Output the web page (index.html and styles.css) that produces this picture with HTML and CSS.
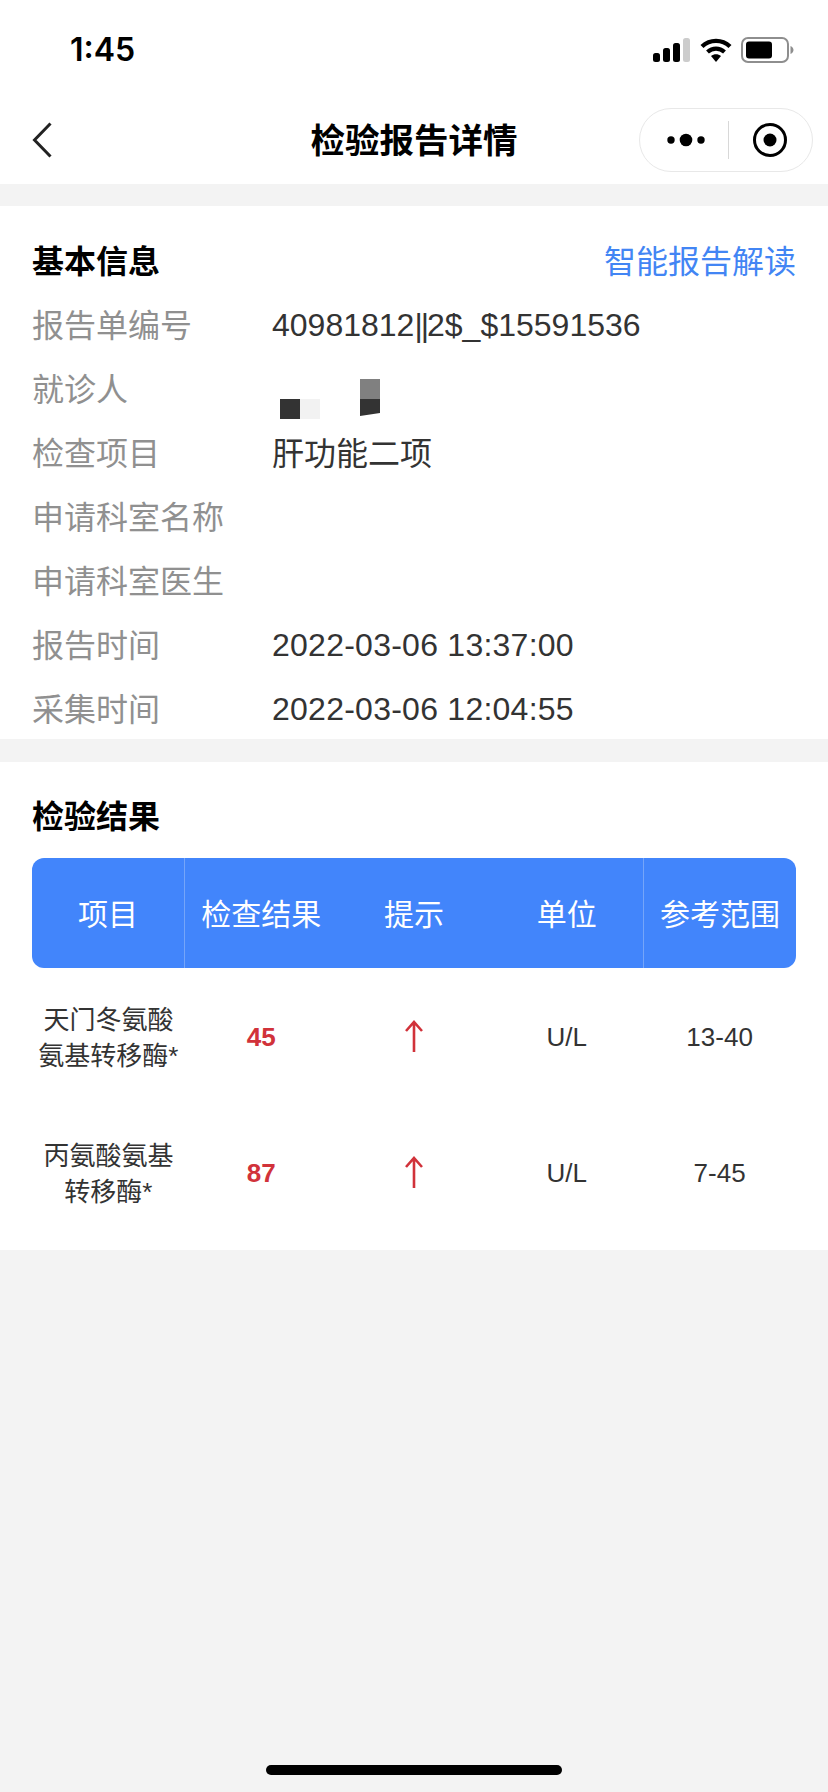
FILE: index.html
```html
<!DOCTYPE html>
<html lang="zh-CN">
<head>
    <meta charset="UTF-8">
    <meta name="viewport" content="width=device-width, initial-scale=1.0">
    <title>检验报告详情</title>
    <link rel="stylesheet" href="styles.css">
</head>
<body>
    <div class="page">
        <div class="status-bar">
            <span class="time">1:45</span>
            <div class="status-icons">
                <svg width="37" height="24" viewBox="0 0 37 24">
                    <rect x="0" y="15" width="7" height="9" rx="2.5" fill="#000"/>
                    <rect x="10" y="10" width="7" height="14" rx="2.5" fill="#000"/>
                    <rect x="20" y="5" width="7" height="19" rx="2.5" fill="#000"/>
                    <rect x="30" y="0" width="7" height="24" rx="2.5" fill="#ccc"/>
                </svg>
                <svg width="32" height="24" viewBox="0 0 32 24">
                    <path d="M2 8.5 C10 1 22 1 30 8.5" fill="none" stroke="#000" stroke-width="4.4"/>
                    <path d="M7.5 14 C12.5 9.5 19.5 9.5 24.5 14" fill="none" stroke="#000" stroke-width="4.2"/>
                    <path d="M11 18 C14 15.6 18 15.6 21 18 L16 24 Z" fill="#000"/>
                </svg>
                <svg width="53" height="26" viewBox="0 0 53 26">
                    <rect x="1" y="1" width="46" height="24" rx="6" fill="none" stroke="#8e8e8e" stroke-width="2"/>
                    <rect x="5" y="4.5" width="26" height="17" rx="3" fill="#000"/>
                    <path d="M49.5 9 C51.5 10 52.5 11.5 52.5 13 C52.5 14.5 51.5 16 49.5 17 Z" fill="#8e8e8e"/>
                </svg>
            </div>
        </div>

        <div class="nav-bar">
            <svg class="back" width="20" height="36" viewBox="0 0 20 36">
                <path d="M18.5 1.5 L2.5 18 L18.5 34.5" fill="none" stroke="#222" stroke-width="3"/>
            </svg>
            <h1 class="nav-title">检验报告详情</h1>
            <div class="capsule">
                <div class="capsule-part capsule-more">
                    <svg width="38" height="14" viewBox="0 0 38 14">
                        <circle cx="4" cy="7" r="3.7" fill="#000"/>
                        <circle cx="19" cy="7" r="6.3" fill="#000"/>
                        <circle cx="34" cy="7" r="3.7" fill="#000"/>
                    </svg>
                </div>
                <div class="capsule-line"></div>
                <div class="capsule-part">
                    <svg width="36" height="36" viewBox="0 0 36 36">
                        <circle cx="18" cy="18" r="15.5" fill="none" stroke="#000" stroke-width="3"/>
                        <circle cx="18" cy="18" r="6.5" fill="#000"/>
                    </svg>
                </div>
            </div>
        </div>

        <section class="card info-card">
            <div class="card-head">
                <h2 class="card-title">基本信息</h2>
                <a class="ai-link">智能报告解读</a>
            </div>
            <div class="info-row"><span class="info-label">报告单编号</span><span class="info-value">40981812<span class="pipes">||</span>2$_$15591536</span></div>
            <div class="info-row">
                <span class="info-label">就诊人</span>
                <span class="info-value">
                    <svg class="mosaic" width="100" height="42" viewBox="0 0 100 42">
                        <rect x="8" y="20" width="20" height="20" fill="#333"/>
                        <rect x="28" y="20" width="20" height="20" fill="#f2f2f2"/>
                        <rect x="88" y="0" width="20" height="20" fill="#808080"/>
                        <path d="M88 20 H108 V34 L88 37 Z" fill="#333"/>
                    </svg>
                </span>
            </div>
            <div class="info-row"><span class="info-label">检查项目</span><span class="info-value info-text">肝功能二项</span></div>
            <div class="info-row"><span class="info-label">申请科室名称</span><span class="info-value"></span></div>
            <div class="info-row"><span class="info-label">申请科室医生</span><span class="info-value"></span></div>
            <div class="info-row"><span class="info-label">报告时间</span><span class="info-value info-date">2022-03-06 13:37:00</span></div>
            <div class="info-row"><span class="info-label">采集时间</span><span class="info-value info-date">2022-03-06 12:04:55</span></div>
        </section>

        <section class="card result-card">
            <h2 class="card-title result-title">检验结果</h2>
            <div class="table-head">
                <div class="th th-line-right">项目</div>
                <div class="th">检查结果</div>
                <div class="th">提示</div>
                <div class="th">单位</div>
                <div class="th th-line-left">参考范围</div>
            </div>
            <div class="table-row">
                <div class="td td-name">天门冬氨酸<br>氨基转移酶*</div>
                <div class="td td-high">45</div>
                <div class="td td-arrow"><svg width="20" height="32" viewBox="0 0 20 32"><path d="M10 32 V2 M2 11 L10 2 L18 11" fill="none" stroke="#d1323a" stroke-width="2.6"/></svg></div>
                <div class="td">U/L</div>
                <div class="td">13-40</div>
            </div>
            <div class="table-row">
                <div class="td td-name">丙氨酸氨基<br>转移酶*</div>
                <div class="td td-high">87</div>
                <div class="td td-arrow"><svg width="20" height="32" viewBox="0 0 20 32"><path d="M10 32 V2 M2 11 L10 2 L18 11" fill="none" stroke="#d1323a" stroke-width="2.6"/></svg></div>
                <div class="td">U/L</div>
                <div class="td">7-45</div>
            </div>
        </section>

        <div class="rest">
            <div class="home-bar"></div>
        </div>
    </div>
</body>
</html>
```

FILE: styles.css
```css
* {
    box-sizing: border-box;
}
body {
    margin: 0;
    font-family: "Liberation Sans", "Noto Sans CJK SC", sans-serif;
    background-color: #f3f3f3;
}
.page {
    display: flex;
    flex-direction: column;
    height: 1792px;
    overflow: hidden;
}

/* status bar */
.status-bar {
    height: 88px;
    background-color: #fff;
    display: flex;
    justify-content: space-between;
    align-items: center;
    padding: 12px 34px 0 70px;
}
.time {
    font-family: Inter, "Liberation Sans", sans-serif;
    font-size: 32px;
    font-weight: 600;
    color: #000;
    margin-top: -1px;
}
.status-icons {
    display: flex;
    align-items: center;
    gap: 9.5px;
    margin-top: -1px;
}

/* nav bar */
.nav-bar {
    height: 96px;
    background-color: #fff;
    display: flex;
    align-items: center;
    justify-content: space-between;
    padding: 8px 15px 0 32px;
    position: relative;
}
.back {
    display: block;
}
.nav-title {
    position: absolute;
    left: 0;
    right: 0;
    margin: -4px 0 0;
    text-align: center;
    font-size: 34.5px;
    font-weight: 700;
    color: #000;
    pointer-events: none;
}
.capsule {
    width: 174px;
    height: 64px;
    border: 1px solid #e8e8e8;
    border-radius: 32px;
    display: flex;
    align-items: center;
    background-color: #fff;
}
.capsule-part {
    flex: 1;
    display: flex;
    justify-content: center;
    align-items: center;
}
.capsule-more {
    padding-left: 4px;
}
.capsule-line {
    width: 1px;
    height: 38px;
    background-color: #d8d8d8;
}

/* cards */
.card {
    background-color: #fff;
    padding: 0 32px;
}
.info-card {
    margin-top: 22px;
    height: 533px;
    padding-top: 23px;
}
.result-card {
    margin-top: 23px;
    height: 488px;
    padding-top: 30px;
}
.card-head {
    display: flex;
    justify-content: space-between;
    align-items: center;
    height: 60px;
    margin-bottom: 4px;
}
.card-title {
    margin: 0;
    font-size: 32px;
    font-weight: 700;
    color: #000;
}
.ai-link {
    font-size: 32px;
    color: #4285f4;
}
.result-title {
    height: 66px;
    line-height: 50px;
}

/* info rows */
.info-row {
    display: flex;
    align-items: center;
    height: 64px;
    font-size: 32px;
}
.info-label {
    width: 240px;
    color: #909090;
    padding-bottom: 4px;
}
.info-value {
    color: #333;
    flex: 1;
}
.info-text {
    padding-bottom: 4px;
}
.info-date {
    letter-spacing: 0.25px;
}
.pipes {
    letter-spacing: -2px;
}
.mosaic {
    display: block;
    overflow: visible;
    margin-top: 22px;
}

/* result table */
.table-head {
    display: grid;
    grid-template-columns: repeat(5, 1fr);
    height: 110px;
    background-color: #4285fb;
    border-radius: 12px;
}
.th {
    display: flex;
    align-items: center;
    justify-content: center;
    font-size: 30px;
    color: #fff;
    padding-bottom: 2px;
}
.th-line-right {
    border-right: 1px solid #75a5f9;
}
.th-line-left {
    border-left: 1px solid #75a5f9;
}
.table-row {
    display: grid;
    grid-template-columns: repeat(5, 1fr);
    height: 136px;
    padding-top: 2px;
}
.td {
    display: flex;
    align-items: center;
    justify-content: center;
    text-align: center;
    font-size: 26px;
    line-height: 36px;
    color: #333;
}
.td-name {
    padding-top: 2px;
}
.td-arrow {
    padding-bottom: 2px;
}
.td-high {
    color: #d1323a;
    font-weight: 700;
}

/* bottom */
.rest {
    flex: 1;
    display: flex;
    flex-direction: column;
    justify-content: flex-end;
    align-items: center;
    padding-bottom: 17px;
}
.home-bar {
    width: 296px;
    height: 10px;
    border-radius: 5px;
    background-color: #000;
}
```
